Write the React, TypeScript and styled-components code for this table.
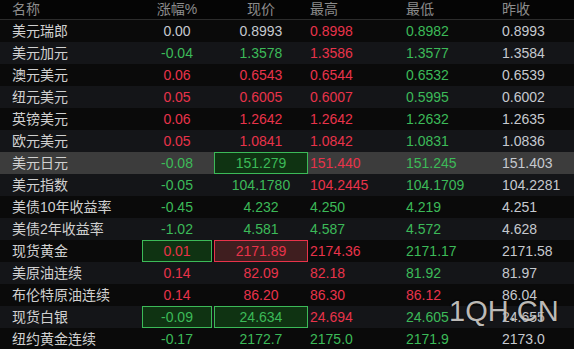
import React from "react";
import styled, { createGlobalStyle, css } from "styled-components";

const Global = createGlobalStyle`
  html, body { margin: 0; padding: 0; background: #0a0a0a; }
  body { font-family: "Liberation Sans", Arial, "Noto Sans CJK SC", sans-serif; }
`;

type Tone = "w" | "r" | "g";
type Box = "none" | "green" | "red";

const toneColor: Record<Tone, string> = {
  w: "#c6c9cf",
  r: "#e8334a",
  g: "#3cba58",
};

const Page = styled.div`
  position: relative;
  width: 574px;
  height: 349px;
  overflow: hidden;
  background: #0a0a0a;
  font-size: 14px;
`;

const cols = "141px 72px 96px 96px 96px 1fr";

const HeaderRow = styled.div`
  display: grid;
  grid-template-columns: ${cols};
  height: 19px;
  line-height: 19px;
  border-bottom: 1px solid #2c2c2c;
  background: #050505;
  color: #8c8c8c;
`;

const HeadCell = styled.div<{ $align: "name" | "center" | "left" }>`
  padding: 0 1px;
  white-space: nowrap;
  ${(p) =>
    p.$align === "name"
      ? css`padding-left: 12px;`
      : p.$align === "center"
      ? css`text-align: center;`
      : css`text-align: left;`}
`;

const Row = styled.div<{ $even: boolean; $selected: boolean }>`
  display: grid;
  grid-template-columns: ${cols};
  height: 22px;
  line-height: 22px;
  background: ${(p) => (p.$selected ? "#3c3c3c" : p.$even ? "#141518" : "#0a0a0a")};
`;

const NameCell = styled.div`
  padding-left: 12px;
  color: #d0d0d0;
  white-space: nowrap;
`;

const Cell = styled.div<{ $center: boolean }>`
  padding: 0 1px;
  display: flex;
  justify-content: ${(p) => (p.$center ? "center" : "flex-start")};
  white-space: nowrap;
`;

const Value = styled.span<{ $tone: Tone; $box: Box }>`
  flex: ${(p) => (p.$box === "none" ? "0 0 auto" : "1 1 auto")};
  box-sizing: border-box;
  height: 22px;
  color: ${(p) => toneColor[p.$tone]};
  text-align: center;
  ${(p) =>
    p.$box === "green" &&
    css`
      background: #0f3312;
      border: 1px solid #3cba58;
      line-height: 20px;
    `}
  ${(p) =>
    p.$box === "red" &&
    css`
      background: #3f1e1f;
      border: 1px solid #e8334a;
      line-height: 20px;
    `}
`;

const Watermark = styled.div`
  position: absolute;
  left: 449px;
  top: 294px;
  font-size: 29px;
  line-height: 34px;
  color: rgba(215, 212, 208, 0.88);
  text-shadow: 0 0 2px rgba(0, 0, 0, 0.6);
  pointer-events: none;
  letter-spacing: 0;
`;

type C = [string, Tone, Box?];
type R = { name: string; cells: C[]; selected?: boolean };

const rows: R[] = [
  { name: "美元瑞郎", cells: [["0.00", "w"], ["0.8993", "w"], ["0.8998", "r"], ["0.8982", "g"], ["0.8993", "w"]] },
  { name: "美元加元", cells: [["-0.04", "g"], ["1.3578", "g"], ["1.3586", "r"], ["1.3577", "g"], ["1.3584", "w"]] },
  { name: "澳元美元", cells: [["0.06", "r"], ["0.6543", "r"], ["0.6544", "r"], ["0.6532", "g"], ["0.6539", "w"]] },
  { name: "纽元美元", cells: [["0.05", "r"], ["0.6005", "r"], ["0.6007", "r"], ["0.5995", "g"], ["0.6002", "w"]] },
  { name: "英镑美元", cells: [["0.06", "r"], ["1.2642", "r"], ["1.2642", "r"], ["1.2632", "g"], ["1.2635", "w"]] },
  { name: "欧元美元", cells: [["0.05", "r"], ["1.0841", "r"], ["1.0842", "r"], ["1.0831", "g"], ["1.0836", "w"]] },
  { name: "美元日元", selected: true, cells: [["-0.08", "g"], ["151.279", "g", "green"], ["151.440", "r"], ["151.245", "g"], ["151.403", "w"]] },
  { name: "美元指数", cells: [["-0.05", "g"], ["104.1780", "g"], ["104.2445", "r"], ["104.1709", "g"], ["104.2281", "w"]] },
  { name: "美债10年收益率", cells: [["-0.45", "g"], ["4.232", "g"], ["4.250", "g"], ["4.219", "g"], ["4.251", "w"]] },
  { name: "美债2年收益率", cells: [["-1.02", "g"], ["4.581", "g"], ["4.587", "g"], ["4.572", "g"], ["4.628", "w"]] },
  { name: "现货黄金", cells: [["0.01", "r", "green"], ["2171.89", "r", "red"], ["2174.36", "r"], ["2171.17", "g"], ["2171.58", "w"]] },
  { name: "美原油连续", cells: [["0.14", "r"], ["82.09", "r"], ["82.18", "r"], ["81.92", "g"], ["81.97", "w"]] },
  { name: "布伦特原油连续", cells: [["0.14", "r"], ["86.20", "r"], ["86.30", "r"], ["86.12", "r"], ["86.04", "w"]] },
  { name: "现货白银", cells: [["-0.09", "g", "green"], ["24.634", "g", "green"], ["24.694", "r"], ["24.605", "g"], ["24.655", "w"]] },
  { name: "纽约黄金连续", cells: [["-0.17", "g"], ["2172.7", "g"], ["2175.0", "g"], ["2171.9", "g"], ["2173.0", "w"]] },
];

const headers: { label: string; align: "name" | "center" | "left" }[] = [
  { label: "名称", align: "name" },
  { label: "涨幅%", align: "center" },
  { label: "现价", align: "center" },
  { label: "最高", align: "left" },
  { label: "最低", align: "left" },
  { label: "昨收", align: "left" },
];

export default function App() {
  return (
    <>
      <Global />
      <Page>
        <HeaderRow>
          {headers.map((h) => (
            <HeadCell key={h.label} $align={h.align}>
              {h.label}
            </HeadCell>
          ))}
        </HeaderRow>
        {rows.map((r, i) => (
          <Row key={r.name} $even={i % 2 === 1} $selected={!!r.selected}>
            <NameCell>{r.name}</NameCell>
            {r.cells.map(([v, t, b], j) => (
              <Cell key={j} $center={j < 2}>
                <Value $tone={t} $box={b ?? "none"}>
                  {v}
                </Value>
              </Cell>
            ))}
          </Row>
        ))}
        <Watermark>1QH.CN</Watermark>
      </Page>
    </>
  );
}
